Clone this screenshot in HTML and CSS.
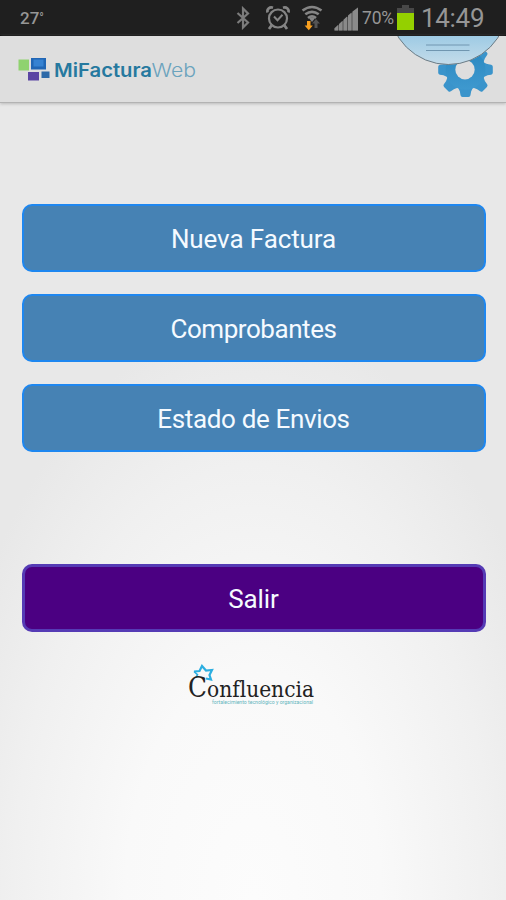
FILE: index.html
```html
<!DOCTYPE html>
<html lang="es">
<head>
  <meta charset="UTF-8">
  <meta name="viewport" content="width=device-width, initial-scale=1">
  <title>MiFacturaWeb</title>
  <link rel="stylesheet" href="styles.css">
</head>
<body>

  <div class="status-bar">
    <span class="temperature">27<span class="degree">°</span></span>

    <div class="status-icons">
      <svg class="bluetooth" width="14" height="24" viewBox="0 0 14 24">
        <path d="M1.5 7 12 16.5 7 21.500V2.500L12 7.500 1.500 17" fill="none" stroke="#7c7c7c" stroke-width="2.200"/>
      </svg>
      <svg class="alarm" width="26" height="26" viewBox="0 0 26 26" fill="none" stroke="#858585">
        <circle cx="13" cy="13.500" r="9" stroke-width="2.200"/>
        <path d="M9 11.500l3.500 3.700 5-5.400" stroke-width="2"/>
        <path d="M2.600 7.500C1.500 4.500 4.500 1.500 8 2.700M23.400 7.500c1.100-3-1.900-6-5.400-4.800" stroke-width="2.600"/>
        <path d="M6.500 20.500 4 24M19.500 20.500l2.500 3.500" stroke-width="2.800"/>
      </svg>
      <svg class="wifi" width="22" height="26" viewBox="0 0 22 26">
        <path d="M1.500 5.500Q11-1.500 20.500 5.500M4.300 9.300Q11 4.300 17.700 9.300M7 13Q11 9.800 15 13" fill="none" stroke="#858585" stroke-width="2.600"/>
        <path d="M8.200 13.500 11 17l2.800-3.500Q11 11.500 8.200 13.500Z" fill="#858585"/>
        <path d="M13.500 23v-4.500H11l4-4.500 4 4.500h-2.500V23Z" fill="#555"/>
        <path d="M6 16h3.500v4.500h2.300l-4 4.700-4.200-4.700H6Z" fill="#f9a01f"/>
      </svg>
      <svg class="signal" width="25" height="24" viewBox="0 0 25 24">
        <path d="M.5 23.500v-2.200L4 18v5.500Z" fill="#8a8a8a"/>
        <path d="M5 23.500V17l3.500-3.300v9.800Z" fill="#8a8a8a"/>
        <path d="M9.500 23.500V12.800L13 9.500v14Z" fill="#8a8a8a"/>
        <path d="M14 23.500V8.600l3.500-3.200v18.100Z" fill="#8a8a8a"/>
        <path d="M18.500 23.500v-19L24 .5v23Z" fill="#8a8a8a"/>
        <path d="M.5 21.500 24 .5v23H.5Z" fill="#8a8a8a" opacity=".5"/>
      </svg>
      <span class="percent">70%</span>
      <svg class="battery" width="17" height="25" viewBox="0 0 17 25">
        <path d="M5 0h7v3h5v22H0V3h5Z" fill="#484848"/>
        <path d="M0 8h17v17H0Z" fill="#94d000"/>
      </svg>
      <span class="clock">14:49</span>
    </div>
  </div>

  <header class="header">
    <svg class="brand" width="182" height="30" viewBox="0 0 182 30">
      <rect x="0.500" y="4.500" width="10.500" height="11" fill="#8fd26f"/>
      <rect x="13" y="3" width="15" height="11.500" fill="#2166b5"/>
      <rect x="15.500" y="4.500" width="10" height="7" fill="#3682d2"/>
      <rect x="10" y="17" width="11" height="8.500" fill="#5b45a3"/>
      <rect x="23.500" y="16.500" width="8" height="6.500" fill="#2d69a8"/>
      <text class="brand-bold" x="36" y="21.500" textLength="98" lengthAdjust="spacingAndGlyphs">MiFactura</text>
      <text class="brand-light" x="133.500" y="21.500" textLength="44.500" lengthAdjust="spacingAndGlyphs">Web</text>
    </svg>

    <!-- settings gear with the pull-down handle over it -->
    <svg class="settings" width="112" height="66" viewBox="394 36 112 66">
      <defs>
        <linearGradient id="gearFill" gradientUnits="userSpaceOnUse" x1="0" y1="42" x2="0" y2="98">
          <stop offset="0" stop-color="#2585bd"/>
          <stop offset="1" stop-color="#439cd2"/>
        </linearGradient>
        <linearGradient id="handleFill" gradientUnits="userSpaceOnUse" x1="0" y1="36" x2="0" y2="65">
          <stop offset="0" stop-color="#9ecbe4"/>
          <stop offset="1" stop-color="#c5dcea"/>
        </linearGradient>
      </defs>
      <g fill="#3a94cb" stroke="#3a94cb" stroke-linejoin="round" stroke-width="4">
        <path id="tooth" d="M459.500 86l2.300 5 .7 4h6l.7-4 2.300-5Z"/>
        <use href="#tooth" transform="rotate(45 465.500 69.700)"/>
        <use href="#tooth" transform="rotate(90 465.500 69.700)"/>
        <use href="#tooth" transform="rotate(-45 465.500 69.700)"/>
        <use href="#tooth" transform="rotate(-90 465.500 69.700)"/>
        <use href="#tooth" transform="rotate(-135 465.500 69.700)"/>
      </g>
      <circle cx="465.500" cy="69.700" r="20" fill="url(#gearFill)"/>
      <circle cx="465" cy="69.700" r="9.700" fill="#dedede"/>
      <circle cx="448.300" cy="5.200" r="59.300" fill="url(#handleFill)" stroke="#6d7c85"/>
      <path d="M426 45h43.500M426 50.500h43.500" stroke="#7096b0"/>
    </svg>
  </header>

  <main class="menu">
    <button class="button">Nueva Factura</button>
    <button class="button comprobantes">Comprobantes</button>
    <button class="button estado">Estado de Envios</button>
    <button class="button exit">Salir</button>

    <svg class="confluencia" width="132" height="46" viewBox="0 0 132 46">
      <path d="M8 7.500 13.500 7 16 2l4 4.500 6-.5-2.500 5 1.500 4.500-5-1" fill="none" stroke="#2caee0" stroke-width="2.200"/>
      <path d="M8 7.500l3.500 3.200-1.500 3" fill="none" stroke="#2caee0" stroke-width="1.600"/>
      <text class="logo-name" x="2" y="33" textLength="126" lengthAdjust="spacingAndGlyphs"><tspan class="logo-initial">C</tspan>onfluencia</text>
      <text class="logo-tagline" x="26" y="39.500" textLength="101" lengthAdjust="spacingAndGlyphs">fortalecimiento tecnológico y organizacional</text>
    </svg>
  </main>

</body>
</html>
```
FILE: styles.css
```css
body {
  margin: 0;
  height: 900px;
  overflow: hidden;
  font-family: Roboto, "Liberation Sans", sans-serif;
  background: radial-gradient(ellipse 320px 580px at 50% 100%, #fcfcfc 0%, #f9f9f9 40%, #f0f0f0 75%, #e8e8e8 100%);
}

/* status bar */
.status-bar {
  display: flex;
  justify-content: space-between;
  box-sizing: border-box;
  height: 36px;
  padding: 0 23px 0 20px;
  background: #1f1f1f;
  border-bottom: 1px solid #000;
  color: #969696;
}
.temperature {
  font-size: 17px;
  font-weight: 500;
  line-height: 37px;
}
.degree {
  font-size: 12px;
  vertical-align: 2px;
}
.status-icons {
  display: flex;
  align-items: center;
}
.alarm {
  margin-left: 15px;
}
.wifi {
  margin-left: 10px;
}
.signal {
  margin: 2px 0 0 11px;
}
.percent {
  width: 34px;
  margin: 1px 0 0 3px;
  font-size: 17.5px;
  letter-spacing: -0.2px;
}
.battery {
  margin-left: 1px;
}
.clock {
  width: 62px;
  margin-left: 7px;
  font-size: 26px;
  letter-spacing: -0.3px;
}

/* header */
.header {
  display: flex;
  justify-content: space-between;
  height: 66px;
  background: #dedede;
  border-bottom: 1px solid #b3b3b3;
  box-shadow: 0 1px 3px #bbb;
}
.brand {
  margin: 19px 0 0 18px;
}
.brand-bold,
.brand-light {
  font-family: Inter, sans-serif;
  font-size: 18.5px;
}
.brand-bold {
  font-weight: 600;
  fill: #26799f;
}
.brand-light {
  font-weight: 300;
  fill: #6ba3bd;
}

/* menu */
.menu {
  display: flex;
  flex-direction: column;
  align-items: center;
  gap: 22px;
  padding: 101px 20.500px 0 21.500px;
}
.button {
  box-sizing: border-box;
  width: 100%;
  height: 68px;
  padding: 2px 0 0;
  border: 2px solid #1e87f0;
  border-radius: 10px;
  background: #4682b4;
  color: #f5faff;
  font-family: inherit;
  font-size: 26px;
  letter-spacing: -0.1px;
}
.comprobantes {
  letter-spacing: -0.45px;
}
.estado {
  letter-spacing: -0.35px;
}
.exit {
  margin-top: 90px;
  border: 3px solid #553bb5;
  background: #4b0082;
}
.confluencia {
  margin: 10px 3px 0 0;
  overflow: visible;
}
.logo-name {
  font-family: "DejaVu Serif", serif;
  font-size: 22px;
  fill: #222;
}
.logo-initial {
  font-size: 27px;
}
.logo-tagline {
  font-size: 4.5px;
  fill: #63b5bd;
}
```
